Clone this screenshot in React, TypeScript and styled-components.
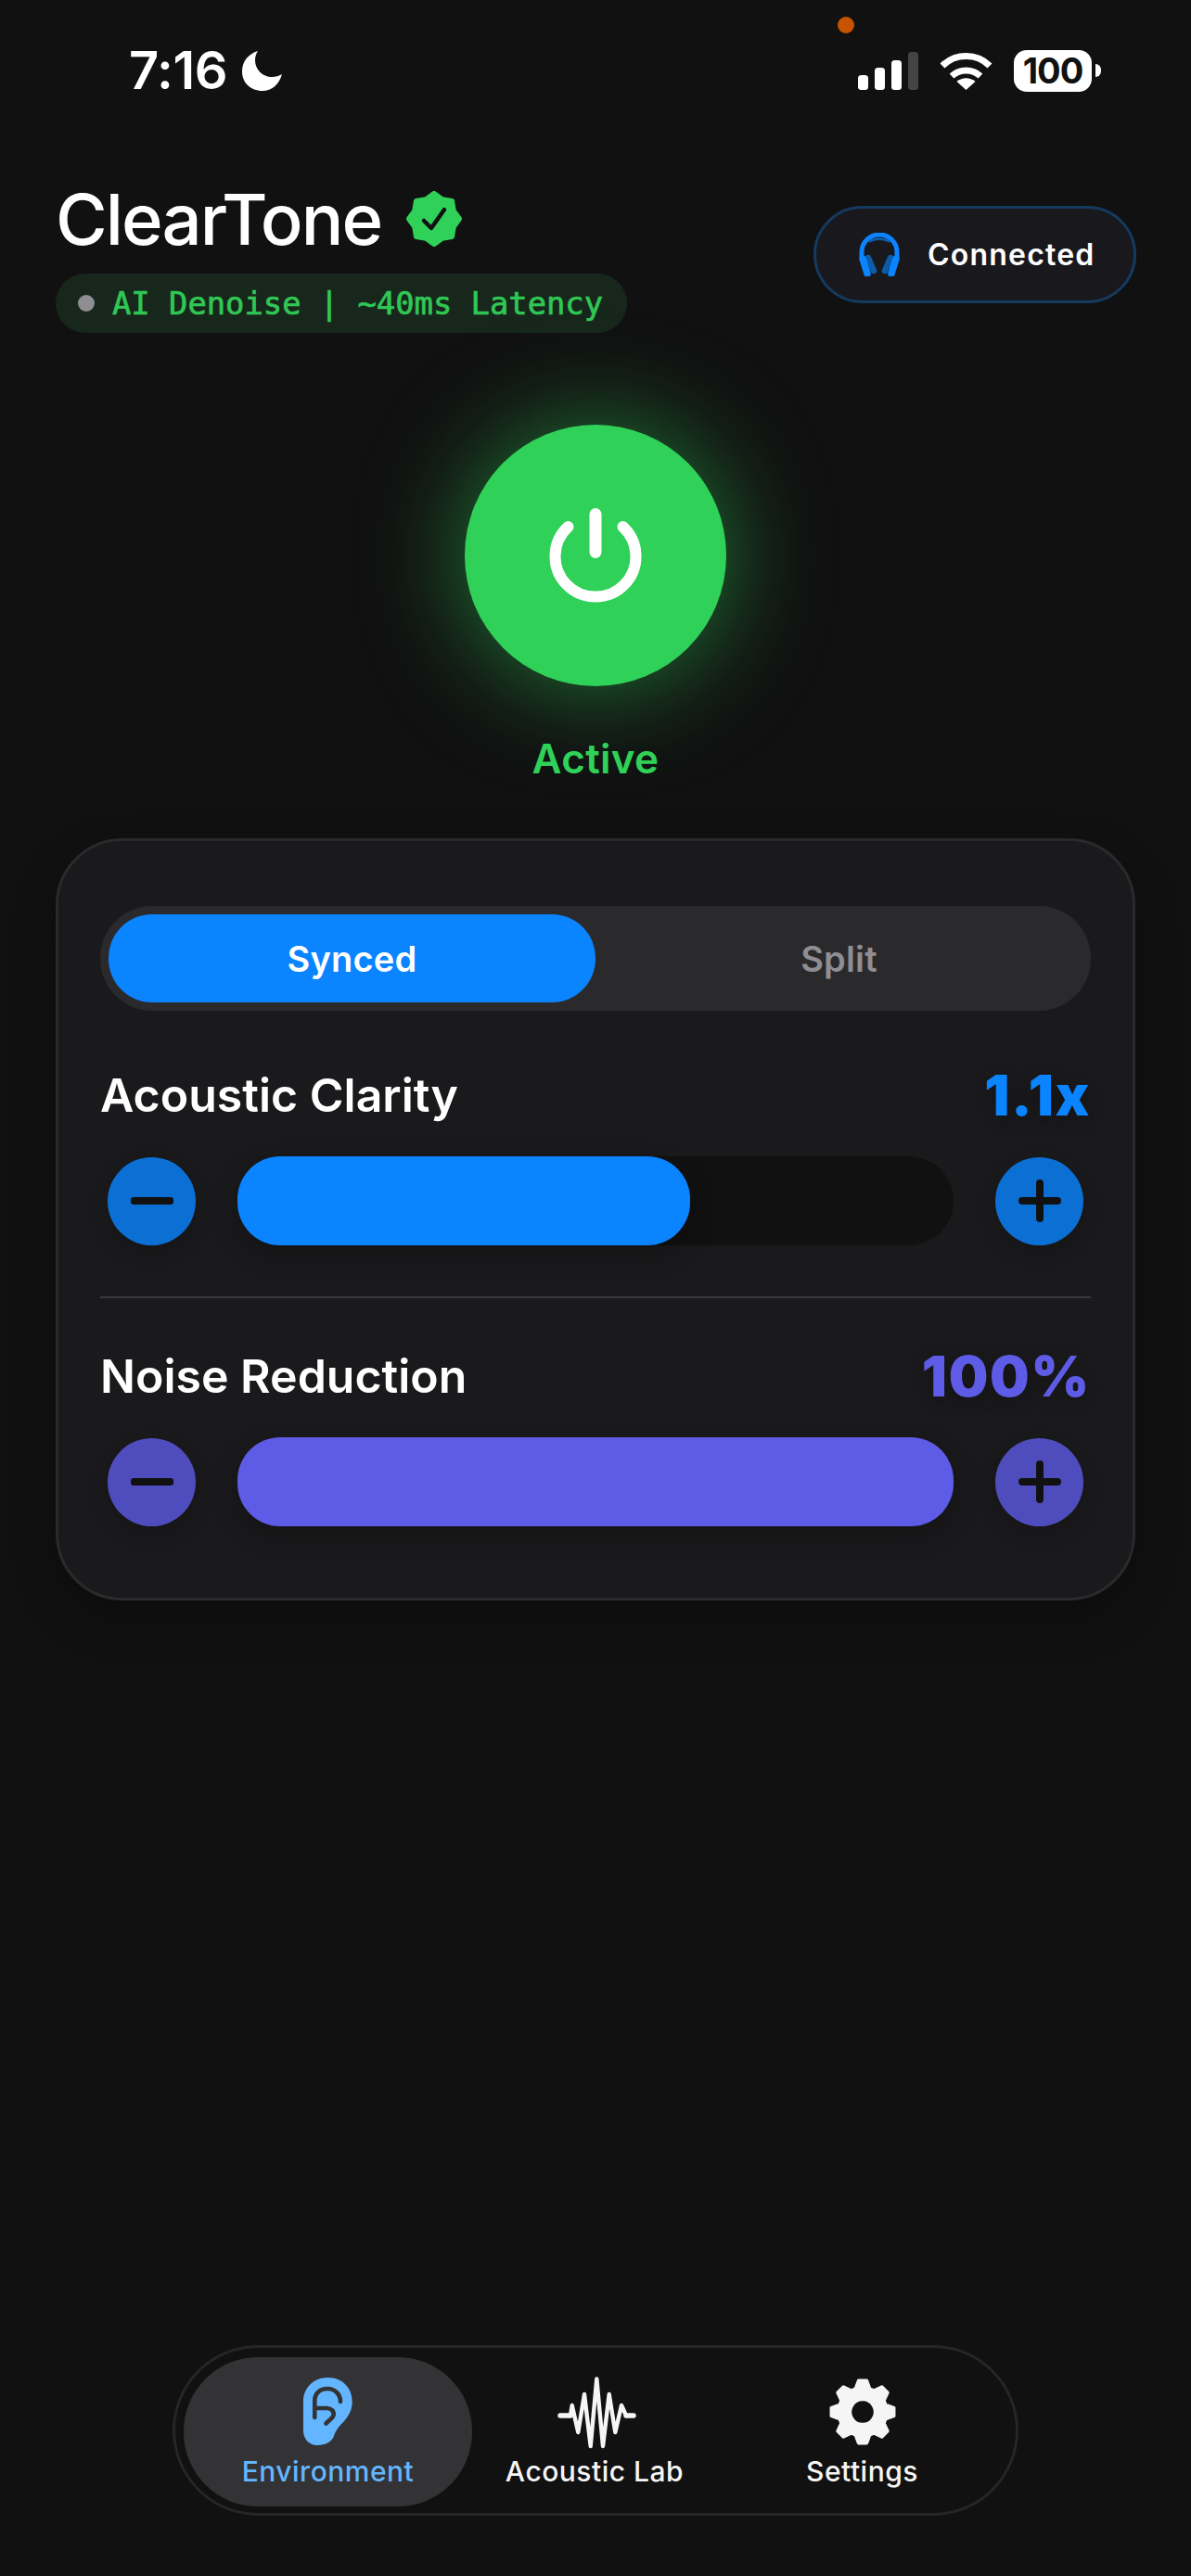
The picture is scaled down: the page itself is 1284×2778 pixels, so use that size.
import styled, { createGlobalStyle } from "styled-components";

const GlobalStyle = createGlobalStyle`
  html, body {
    margin: 0;
    padding: 0;
    background: #111111;
  }
  * {
    box-sizing: border-box;
  }
`;

const Page = styled.div`
  position: relative;
  display: flex;
  flex-direction: column;
  width: 1284px;
  height: 2778px;
  overflow: hidden;
  background: #111111;
  color: #ffffff;
  font-family: Inter, "Liberation Sans", sans-serif;
`;

const RecordingDot = styled.span`
  position: absolute;
  left: 903px;
  top: 18px;
  width: 18px;
  height: 18px;
  border-radius: 50%;
  background: #c75300;
`;

const StatusBar = styled.div`
  display: flex;
  justify-content: space-between;
  align-items: center;
  height: 110px;
  padding: 42px 97px 0 139px;
`;

const StatusGroup = styled.div`
  display: flex;
  align-items: center;
`;

const Time = styled.span`
  font-size: 56px;
  font-weight: 600;
  line-height: 68px;
  letter-spacing: -0.4px;
  margin-right: 16px;
`;

const Battery = styled.span`
  display: flex;
  justify-content: center;
  align-items: center;
  width: 84px;
  height: 45px;
  margin-left: 23px;
  border-radius: 14px;
  background: #ffffff;
  color: #111111;
  font-size: 38px;
  font-weight: 700;
  letter-spacing: -1px;
`;

const BatteryCap = styled.span`
  width: 6px;
  height: 14px;
  margin-left: 4px;
  border-radius: 0 7px 7px 0;
  background: #ffffff;
`;

const Header = styled.header`
  display: flex;
  justify-content: space-between;
  align-items: flex-start;
  margin-top: 80px;
  padding: 0 59px 0 60px;
`;

const TitleRow = styled.div`
  display: flex;
  align-items: center;
  gap: 27px;
  height: 92px;
`;

const Title = styled.h1`
  margin: 0;
  font-size: 76px;
  font-weight: 500;
  line-height: 92px;
  letter-spacing: -1.9px;
`;

const LatencyPill = styled.div`
  display: flex;
  align-items: center;
  gap: 19px;
  width: 616px;
  height: 64px;
  margin-top: 13px;
  padding-left: 24px;
  border-radius: 32px;
  background: #18271c;
`;

const LatencyDot = styled.span`
  width: 18px;
  height: 18px;
  border-radius: 50%;
  background: #8e8e93;
`;

const LatencyText = styled.span`
  color: #30c755;
  font-family: "DejaVu Sans Mono", "Liberation Mono", monospace;
  font-size: 33.8px;
  font-weight: 400;
  white-space: pre;
  -webkit-text-stroke: 0.7px #30c755;
`;

const ConnectedPill = styled.div`
  display: flex;
  align-items: center;
  gap: 30px;
  width: 348px;
  height: 105px;
  margin-top: 32px;
  padding-left: 46px;
  border: 3px solid #153a60;
  border-radius: 53px;
  background: #19191d;
  font-size: 32px;
  font-weight: 600;
  letter-spacing: 1.2px;
`;

const PowerSection = styled.section`
  display: flex;
  flex-direction: column;
  align-items: center;
  margin-top: 99px;
`;

const PowerButton = styled.button`
  display: flex;
  justify-content: center;
  align-items: center;
  width: 282px;
  height: 282px;
  padding: 0;
  border: 0;
  border-radius: 50%;
  background: #30d158;
  box-shadow: 0 0 110px rgba(48, 209, 88, 0.55);
`;

const PowerLabel = styled.span`
  margin-top: 51px;
  color: #30d158;
  font-size: 44px;
  font-weight: 600;
  line-height: 54px;
  letter-spacing: 0.3px;
`;

const Card = styled.section`
  display: flex;
  flex-direction: column;
  width: 1164px;
  height: 822px;
  margin: 59px 0 0 60px;
  padding: 70px 45px 0;
  border: 3px solid #2a2a2c;
  border-radius: 72px;
  background: #1a1a1c;
  box-shadow: 0 20px 50px rgba(0, 0, 0, 0.3);
`;

const Segment = styled.div`
  display: grid;
  grid-template-columns: 525px 1fr;
  height: 113px;
  padding: 9px;
  border-radius: 56px;
  background: #2a2a2c;
`;

const SegmentOption = styled.div<{ $active?: boolean }>`
  display: flex;
  justify-content: center;
  align-items: center;
  border-radius: 47px;
  background: ${(props) => (props.$active ? "#0a84ff" : "transparent")};
  color: ${(props) => (props.$active ? "#ffffff" : "#8e8e93")};
  font-size: 38px;
  font-weight: 600;
  letter-spacing: 0.2px;
`;

const ControlHeader = styled.div<{ $first?: boolean }>`
  display: flex;
  justify-content: space-between;
  align-items: center;
  height: 60px;
  margin-top: ${(props) => (props.$first ? "61px" : "54px")};
`;

const ControlLabel = styled.span`
  font-size: 50px;
  font-weight: 600;
  line-height: 60px;
`;

const ControlValue = styled.span<{ $accent: string }>`
  color: ${(props) => props.$accent};
  font-size: 60px;
  font-weight: 900;
  line-height: 60px;
  letter-spacing: 1.8px;
  text-shadow: 0 4px 20px rgba(0, 0, 0, 0.3);
`;

const SliderRow = styled.div`
  display: flex;
  align-items: center;
  gap: 45px;
  margin-top: 36px;
  padding: 0 8px;
`;

const StepButton = styled.button<{ $accent: string }>`
  display: flex;
  flex: none;
  justify-content: center;
  align-items: center;
  width: 95px;
  height: 95px;
  padding: 0;
  border: 0;
  border-radius: 50%;
  background: ${(props) => props.$accent};
  box-shadow: 0 8px 24px rgba(0, 0, 0, 0.2);
`;

const Track = styled.div`
  flex: 1;
  height: 96px;
  border-radius: 48px;
  background: #111111;
`;

const TrackFill = styled.div<{ $accent: string }>`
  height: 100%;
  border-radius: 46px;
  background: ${(props) => props.$accent};
  box-shadow: 0 10px 30px rgba(0, 0, 0, 0.3);
`;

const Divider = styled.hr`
  width: 100%;
  height: 2px;
  margin: 55px 0 0;
  border: 0;
  background: #3a3a3c;
`;

const NavWrap = styled.div`
  display: flex;
  margin-top: auto;
  padding: 0 0 65px 186px;
`;

const Nav = styled.nav`
  display: grid;
  grid-template-columns: 311px 264px 1fr;
  width: 912px;
  height: 184px;
  padding: 10px 9px 7px;
  border: 3px solid #262628;
  border-radius: 92px;
  background: #111111;
`;

const NavItem = styled.div<{ $active?: boolean }>`
  display: flex;
  flex-direction: column;
  align-items: center;
  padding-top: 21px;
  border-radius: 80px;
  background: ${(props) => (props.$active ? "#333335" : "transparent")};
  color: ${(props) => (props.$active ? "#64b5ff" : "#f5f5f5")};
`;

const NavIcon = styled.span`
  display: flex;
  justify-content: center;
  width: 100%;
  height: 78px;
`;

const NavLabel = styled.span`
  margin-top: 6px;
  font-size: 30px;
  font-weight: 500;
  line-height: 36px;
  letter-spacing: 0.5px;
`;

const Moon = () => (
  <svg width="44" height="43" viewBox="0 0 44 43" fill="#fff">
    <path d="M17 0C7 3 0 11 0 22c0 12 9 21 22 21 10 0 18-7 21-18-3 2-7 3-11 3-10 0-18-8-18-18 0-4 1-7 3-10Z" />
  </svg>
);

const Signal = () => (
  <svg width="65" height="41" viewBox="0 0 65 41" style={{ marginRight: 23 }}>
    <rect x="0" y="25" width="11" height="16" rx="3.5" fill="#fff" />
    <rect x="18" y="17" width="11" height="24" rx="3.5" fill="#fff" />
    <rect x="36" y="9" width="11" height="32" rx="3.5" fill="#fff" />
    <rect x="54" y="0" width="11" height="41" rx="3.5" fill="#444" />
  </svg>
);

const Wifi = () => (
  <svg width="57" height="42" viewBox="0 0 57 42" fill="none" stroke="#fff" strokeWidth="7">
    <path d="M3 16C17 2 40 2 54 16" />
    <path d="M13 27c9-8 22-8 31 0" />
    <path d="M18.5 33c6-5 14-5 20 0l-10 9Z" fill="#fff" stroke="none" />
  </svg>
);

const Seal = () => {
  const points = Array.from({ length: 16 }, (_, i) => {
    const r = i % 2 === 0 ? 27 : 22.5;
    const a = (i * Math.PI) / 8 - Math.PI / 2;
    return `${30 + r * Math.cos(a)},${30 + r * Math.sin(a)}`;
  }).join(" ");
  return (
    <svg width="60" height="60" viewBox="0 0 60 60">
      <polygon points={points} fill="#30d158" stroke="#30d158" strokeWidth="6" strokeLinejoin="round" />
      <path d="M19 32l8 8 14-20" fill="none" stroke="#111" strokeWidth="4.5" strokeLinecap="round" strokeLinejoin="round" />
    </svg>
  );
};

const Headphones = () => (
  <svg width="44" height="47" viewBox="0 0 44 47" fill="none" strokeLinecap="round">
    <path d="M3 26V21a19 19 0 0 1 38 0V26" stroke="#0a84ff" strokeWidth="5" />
    <path d="M12 9c6-3 14-3 20 0" stroke="#0c5cab" strokeWidth="3" />
    <path d="M10 27l6 14M34 27l-6 14" stroke="#0c5cab" strokeWidth="6.5" />
    <path d="M4 28l5 16M40 28l-5 16" stroke="#0a84ff" strokeWidth="7.5" />
  </svg>
);

const PowerIcon = () => (
  <svg width="100" height="116" viewBox="0 0 100 116" fill="none" stroke="#fff" strokeLinecap="round">
    <path d="M20.5 27A43.5 43.5 0 1 0 79.5 27" strokeWidth="12" />
    <path d="M50 13.5V54.5" strokeWidth="13" />
  </svg>
);

const Minus = () => (
  <svg width="46" height="46" viewBox="0 0 46 46">
    <rect x="0" y="19" width="46" height="8" rx="3" fill="#111" />
  </svg>
);

const Plus = () => (
  <svg width="46" height="46" viewBox="0 0 46 46" fill="#111">
    <rect x="0" y="19" width="46" height="8" rx="4" />
    <rect x="19" y="0" width="8" height="46" rx="4" />
  </svg>
);

const EarIcon = () => (
  <svg width="53" height="74" viewBox="0 -1 53 74">
    <path
      d="M26.5 0C42 0 52.7 11 52.7 26 52.7 35 49 41 44 47 38 53 35 57 33 63 31 69 24 73 15 73 6 73 0 66 0 57V26C0 11 11 0 26.5 0Z"
      fill="currentColor"
    />
    <path
      d="M12.3 43V25C12.3 17 18 12 26 12 34 12 40 18 40 26M12.3 33H25C30 33 33 36 32.7 40 32.5 43 28 46 24.5 49.5"
      fill="none"
      stroke="#333335"
      strokeWidth="4.6"
      strokeLinecap="round"
    />
  </svg>
);

const WaveIcon = () => (
  <svg width="90" height="78" viewBox="0 0 90 78" fill="none" stroke="currentColor" strokeLinecap="round" strokeLinejoin="round">
    <path d="M8 42H19M79 42H87" strokeWidth="5.5" />
    <path d="M19 42L20.7 31L27.3 60L34 19L40.7 75L47.3 2.5L54 75L60.7 19L67.3 60L74 31L79 42" strokeWidth="4.4" />
  </svg>
);

const GearIcon = () => {
  const teeth = 8;
  const path: string[] = [];
  for (let i = 0; i < teeth; i++) {
    const c = (i * 2 * Math.PI) / teeth - Math.PI / 2;
    const at = (r: number, d: number) =>
      `${(38 + r * Math.cos(c + d)).toFixed(2)} ${(38 + r * Math.sin(c + d)).toFixed(2)}`;
    path.push(`${i === 0 ? "M" : "L"}${at(26, -0.3)}`, `L${at(34, -0.13)}`, `L${at(34, 0.13)}`, `L${at(26, 0.3)}`);
  }
  return (
    <svg width="76" height="76" viewBox="0 0 76 76">
      <path
        d={`${path.join(" ")} Z M38 24.5a13.5 13.5 0 1 0 0.01 0Z`}
        fill="currentColor"
        fillRule="evenodd"
        stroke="currentColor"
        strokeWidth="3.5"
        strokeLinejoin="round"
      />
    </svg>
  );
};

type ControlProps = {
  label: string;
  value: string;
  percent: number;
  accent: string;
  stepColor: string;
  first?: boolean;
};

function Control({ label, value, percent, accent, stepColor, first }: ControlProps) {
  return (
    <>
      <ControlHeader $first={first}>
        <ControlLabel>{label}</ControlLabel>
        <ControlValue $accent={accent}>{value}</ControlValue>
      </ControlHeader>
      <SliderRow>
        <StepButton $accent={stepColor}>
          <Minus />
        </StepButton>
        <Track>
          <TrackFill $accent={accent} style={{ width: `${percent}%` }} />
        </Track>
        <StepButton $accent={stepColor}>
          <Plus />
        </StepButton>
      </SliderRow>
    </>
  );
}

export default function App() {
  return (
    <Page>
      <GlobalStyle />
      <RecordingDot />
      <StatusBar>
        <StatusGroup>
          <Time>7:16</Time>
          <Moon />
        </StatusGroup>
        <StatusGroup>
          <Signal />
          <Wifi />
          <Battery>100</Battery>
          <BatteryCap />
        </StatusGroup>
      </StatusBar>

      <Header>
        <div>
          <TitleRow>
            <Title>ClearTone</Title>
            <Seal />
          </TitleRow>
          <LatencyPill>
            <LatencyDot />
            <LatencyText>AI Denoise | ~40ms Latency</LatencyText>
          </LatencyPill>
        </div>
        <ConnectedPill>
          <Headphones />
          Connected
        </ConnectedPill>
      </Header>

      <PowerSection>
        <PowerButton>
          <PowerIcon />
        </PowerButton>
        <PowerLabel>Active</PowerLabel>
      </PowerSection>

      <Card>
        <Segment>
          <SegmentOption $active>Synced</SegmentOption>
          <SegmentOption>Split</SegmentOption>
        </Segment>
        <Control first label="Acoustic Clarity" value="1.1x" percent={63.2} accent="#0a84ff" stepColor="#0b6fd4" />
        <Divider />
        <Control label="Noise Reduction" value="100%" percent={100} accent="#5e5ce6" stepColor="#4f4dbd" />
      </Card>

      <NavWrap>
        <Nav>
          <NavItem $active>
            <NavIcon>
              <EarIcon />
            </NavIcon>
            <NavLabel>Environment</NavLabel>
          </NavItem>
          <NavItem>
            <NavIcon>
              <WaveIcon />
            </NavIcon>
            <NavLabel>Acoustic Lab</NavLabel>
          </NavItem>
          <NavItem>
            <NavIcon>
              <GearIcon />
            </NavIcon>
            <NavLabel>Settings</NavLabel>
          </NavItem>
        </Nav>
      </NavWrap>
    </Page>
  );
}
